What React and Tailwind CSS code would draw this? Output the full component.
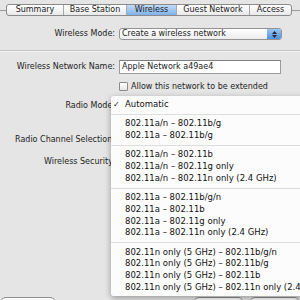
import React from "react";

const tabs = [
  { name: "Summary", w: "w-[56px]" },
  { name: "Base Station", w: "w-[63px]" },
  { name: "Wireless", w: "w-[50px]", sel: true },
  { name: "Guest Network", w: "w-[73px]" },
  { name: "Access", w: "w-[42px]" },
];

const groups = [
  ["802.11a/n – 802.11b/g", "802.11a – 802.11b/g"],
  ["802.11a/n – 802.11b", "802.11a/n – 802.11g only", "802.11a/n – 802.11n only (2.4 GHz)"],
  ["802.11a – 802.11b/g/n", "802.11a – 802.11b", "802.11a – 802.11g only", "802.11a – 802.11n only (2.4 GHz)"],
  [
    "802.11n only (5 GHz) – 802.11b/g/n",
    "802.11n only (5 GHz) – 802.11b/g",
    "802.11n only (5 GHz) – 802.11b",
    "802.11n only (5 GHz) – 802.11n only (2.4 GHz)",
  ],
];

function Label({ children }) {
  return (
    <div className="w-[115px] shrink-0 whitespace-nowrap text-right text-[8px] leading-[12px] text-[#1c1c1c]">
      {children}
    </div>
  );
}

function Sep() {
  return (
    <div className="flex h-[7.5px] items-center">
      <div className="h-px w-full bg-[#dedede]" />
    </div>
  );
}

function Item({ children, check }) {
  return (
    <div className="flex h-[11.75px] items-center whitespace-nowrap text-[8.5px] leading-[11.75px] text-[#111]">
      <div className="w-[14px] shrink-0 pl-[2px] text-[8px]">{check ? "✓" : ""}</div>
      <div>{children}</div>
    </div>
  );
}

export default function App() {
  return (
    <div className="relative flex h-[300px] w-[300px] flex-col overflow-hidden bg-[#e5e5e5] pt-[4px] font-['DejaVu_Sans',sans-serif]">
      {/* tab bar */}
      <div className="flex h-[12px] items-center">
        <div className="h-px w-[6px] bg-[#9a9a9a]" />
        <div className="flex h-[12px] overflow-hidden rounded-[3px] border border-[#8a8a8a] bg-gradient-to-b from-white to-[#e9e9e9]">
          {tabs.map((t, i) => (
            <div
              key={t.name}
              className={`${t.w} flex items-center justify-center whitespace-nowrap text-[8px] leading-[10px] text-[#1a1a1a] ${
                i > 0 ? "border-l border-[#a8a8a8]" : ""
              } ${t.sel ? "bg-gradient-to-b from-[#c2dbf7] to-[#7eb1ea]" : ""}`}
            >
              {t.name}
            </div>
          ))}
        </div>
        <div className="h-px flex-1 bg-[#9a9a9a]" />
      </div>

      {/* Wireless mode */}
      <div className="mt-[12px] flex h-[12px] items-center">
        <Label>Wireless Mode:</Label>
        <div className="ml-[4px] flex h-[12px] w-[163px] items-center overflow-hidden rounded-[3px] border border-[#939393] bg-gradient-to-b from-white to-[#ededed]">
          <div className="flex-1 whitespace-nowrap pl-[2px] text-[8px] leading-[10px] text-[#1a1a1a]">
            Create a wireless network
          </div>
          <div className="flex h-full w-[14px] flex-col items-center justify-center gap-[1px] bg-gradient-to-b from-[#9cc4f2] to-[#4f91e0]">
            <svg width="5" height="3" viewBox="0 0 5 3">
              <path d="M0 3 L2.5 0 L5 3 Z" fill="#1d2a3c" />
            </svg>
            <svg width="5" height="3" viewBox="0 0 5 3">
              <path d="M0 0 L2.5 3 L5 0 Z" fill="#1d2a3c" />
            </svg>
          </div>
        </div>
      </div>

      {/* separator */}
      <div className="mt-[10px] h-[2px] border-t border-b border-t-[#c3c3c3] border-b-[#f3f3f3]" />

      {/* network name */}
      <div className="mt-[8px] flex h-[14px] items-center">
        <Label>Wireless Network Name:</Label>
        <div className="ml-[4px] flex h-[14px] w-[162px] items-center border border-[#9b9b9b] border-t-[#7f7f7f] bg-white pl-[2px] text-[8px] leading-[12px] text-[#1a1a1a] whitespace-nowrap">
          Apple Network a49ae4
        </div>
      </div>

      {/* checkbox */}
      <div className="mt-[8px] flex h-[9px] items-center">
        <div className="w-[119px] shrink-0" />
        <div className="h-[9px] w-[9px] rounded-[1px] border border-[#8a8a8a] bg-gradient-to-b from-white to-[#e6e6e6]" />
        <div className="ml-[3px] whitespace-nowrap text-[8px] leading-[10px] text-[#1c1c1c]">
          Allow this network to be extended
        </div>
      </div>

      <div className="mt-[9px] flex h-[12px] items-center">
        <Label>Radio Mode:</Label>
      </div>
      <div className="mt-[22px] flex h-[12px] items-center">
        <Label>Radio Channel Selection:</Label>
      </div>
      <div className="mt-[10px] flex h-[12px] items-center">
        <Label>Wireless Security:</Label>
      </div>

      {/* bottom buttons */}
      <div className="mt-[129px] flex h-[18px] shrink-0">
        <div className="h-[18px] w-[63px] rounded-[6px] border border-[#8d8d8d] bg-gradient-to-b from-white to-[#ececec]" />
        <div className="ml-[137px] h-[18px] w-[57px] rounded-[6px] border border-[#8d8d8d] bg-gradient-to-b from-white to-[#ececec]" />
        <div className="ml-[5px] h-[18px] w-[57px] rounded-[6px] border border-[#8d8d8d] bg-gradient-to-b from-white to-[#ececec]" />
      </div>

      {/* popup menu */}
      <div className="absolute left-[111px] top-[96px] w-[200px] rounded-[3px] bg-[rgba(252,252,252,0.97)] pt-[3px] pb-[2px] shadow-[0_2px_6px_rgba(0,0,0,0.35)]">
        <Item check>Automatic</Item>
        {groups.map((g, gi) => (
          <React.Fragment key={gi}>
            <Sep />
            {g.map((s) => (
              <Item key={s}>{s}</Item>
            ))}
          </React.Fragment>
        ))}
      </div>
    </div>
  );
}
